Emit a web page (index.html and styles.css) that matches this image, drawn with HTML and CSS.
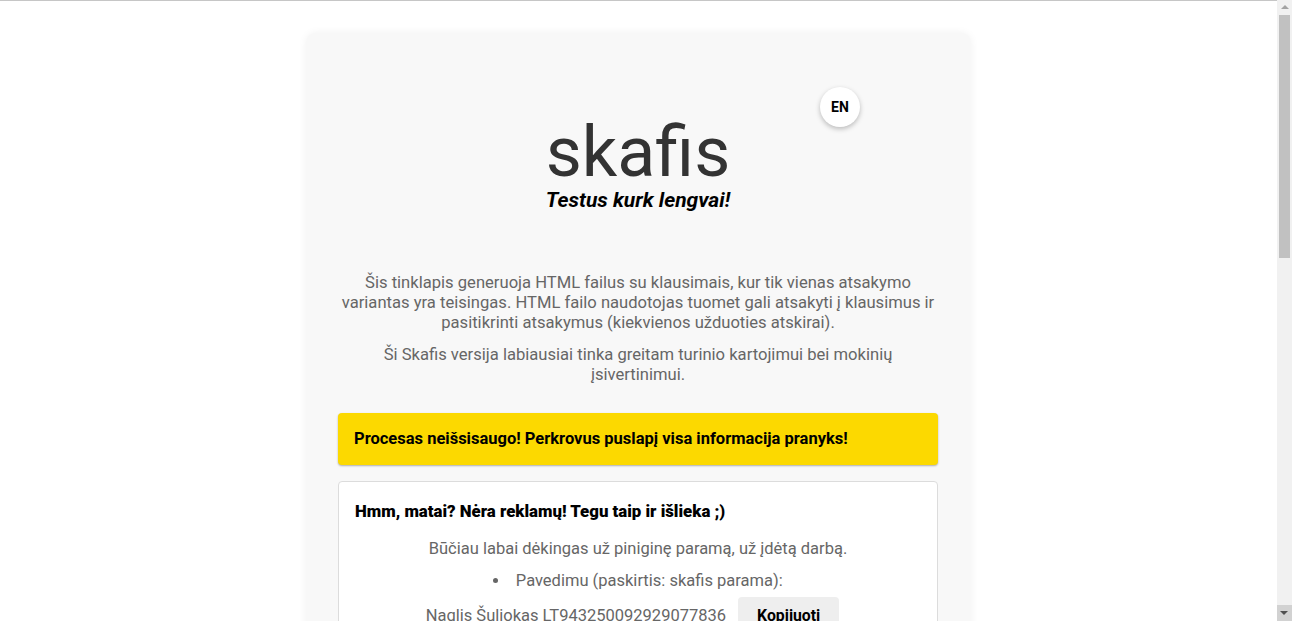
FILE: index.html
```html
<!DOCTYPE html>
<html lang="lt">
<head>
<meta charset="utf-8">
<title>skafis</title>
<link rel="stylesheet" href="styles.css">
</head>
<body>
<div class="page">
  <main class="card">
    <header class="hero">
      <button class="lang">EN</button>
      <h1 class="logo">ska&#xFB01;s</h1>
      <p class="tagline">Testus kurk lengvai!</p>
    </header>
    <section class="intro">
      <p>Šis tinklapis generuoja HTML failus su klausimais, kur tik vienas atsakymo variantas yra teisingas. HTML failo naudotojas tuomet gali atsakyti į klausimus ir pasitikrinti atsakymus (kiekvienos užduoties atskirai).</p>
      <p>Ši Skafis versija labiausiai tinka greitam turinio kartojimui bei mokinių įsivertinimui.</p>
    </section>
    <div class="warning">Procesas neišsisaugo! Perkrovus puslapį visa informacija pranyks!</div>
    <section class="donate">
      <h2 class="donate-title">Hmm, matai? Nėra reklamų! Tegu taip ir išlieka ;)</h2>
      <p class="donate-text">Būčiau labai dėkingas už piniginę paramą, už įdėtą darbą.</p>
      <ul class="donate-list">
        <li>Pavedimu (paskirtis: skafis parama):</li>
      </ul>
      <div class="account">
        <span>Naglis Šuliokas LT943250092929077836</span>
        <button class="copy">Kopijuoti</button>
      </div>
      <ul class="donate-list">
        <li>Per PayPal arba Revolut</li>
      </ul>
    </section>
    <section class="more">
      <h2 class="donate-title">Testo kūrimas</h2>
      <p class="donate-text">Įveskite testo pavadinimą ir klausimus.</p>
    </section>
    <section class="more tall">
      <h2 class="donate-title">Klausimai</h2>
      <p class="donate-text">Pridėkite klausimus ir atsakymų variantus.</p>
    </section>
  </main>
</div>
<div class="scrollbar" aria-hidden="true">
  <span class="sb-up"></span>
  <span class="sb-thumb"></span>
  <span class="sb-down"></span>
</div>
</body>
</html>
```

FILE: styles.css
```css
* { box-sizing: border-box; }
html, body { margin: 0; padding: 0; }
body {
  background: #ffffff;
  font-family: Roboto, "Liberation Sans", sans-serif;
  border-top: 1px solid #c6c6c6;
}
.page {
  margin-right: 15px;
  padding: 32px 0 60px;
}
.card {
  width: 665px;
  margin: 0 auto;
  background: #f8f8f8;
  border-radius: 10px;
  box-shadow: 0 0 8px rgba(0,0,0,0.06);
  padding: 0 33px 40px 32px;
}
.hero {
  position: relative;
  text-align: center;
  padding-top: 79px;
  padding-bottom: 61px;
}
.lang {
  position: absolute;
  top: 54px;
  left: 482px;
  width: 40px;
  height: 40px;
  border-radius: 50%;
  border: none;
  background: #fff;
  box-shadow: 0 2px 5px rgba(0,0,0,0.25);
  font-family: Roboto, "Liberation Sans", sans-serif;
  font-weight: 700;
  font-size: 14px;
  color: #000;
  padding: 0;
}
.logo {
  margin: 0;
  font-size: 70px;
  font-weight: 400;
  line-height: 80px;
  color: #333;
}
.tagline {
  margin: -4px 0 0;
  font-size: 21px;
  font-weight: 700;
  font-style: italic;
  line-height: 24px;
  color: #000;
}
.intro {
  text-align: center;
  color: #666;
  font-size: 16.6px;
  line-height: 20px;
}
.intro p { margin: 0 0 12px; }
.warning {
  margin-top: 28px;
  background: #fcd900;
  border-radius: 4px;
  box-shadow: 0 1px 2px rgba(0,0,0,0.3);
  padding: 16px 16px;
  font-size: 16.5px;
  font-weight: 700;
  line-height: 20px;
  color: #000;
}
.donate, .more {
  margin-top: 16px;
  background: #fff;
  border: 1px solid #dcdcdc;
  border-radius: 4px;
  padding: 17px 16px 16px;
  text-align: center;
}
.tall { min-height: 700px; }
.donate-title {
  margin: 0 0 16px;
  text-align: left;
  font-size: 16.8px;
  font-weight: 900;
  line-height: 24px;
  color: #000;
}
.donate-text {
  margin: 0 0 12px;
  color: #666;
  font-size: 16.5px;
  line-height: 20px;
}
.donate-list {
  list-style: disc inside;
  margin: 0 0 6px;
  padding: 0;
  color: #666;
  font-size: 16.5px;
  line-height: 20px;
}
.account {
  display: flex;
  justify-content: center;
  align-items: center;
  gap: 12px;
  color: #666;
  font-size: 16.5px;
  margin-bottom: 12px;
  padding-right: 11px;
}
.copy {
  background: #eeeeee;
  border: none;
  border-radius: 4px;
  padding: 0 19px;
  height: 36px;
  font-family: Roboto, "Liberation Sans", sans-serif;
  font-weight: 700;
  font-size: 15.8px;
  color: #000;
}
.scrollbar {
  position: fixed;
  top: 0;
  right: 0;
  width: 15px;
  height: 100%;
  background: #f1f1f1;
  display: flex;
  flex-direction: column;
  align-items: center;
}
.sb-up {
  width: 0;
  height: 0;
  margin-top: 5px;
  border-left: 4px solid transparent;
  border-right: 4px solid transparent;
  border-bottom: 4px solid #a3a3a3;
}
.sb-thumb {
  margin-top: 6px;
  width: 11px;
  height: 243px;
  background: #c1c1c1;
}
.sb-down {
  margin-top: auto;
  width: 15px;
  height: 16px;
  background: #d2d2d2;
  position: relative;
}
.sb-down::after {
  content: "";
  position: absolute;
  left: 3px;
  top: 6px;
  border-left: 4px solid transparent;
  border-right: 4px solid transparent;
  border-top: 4px solid #505050;
}
```
